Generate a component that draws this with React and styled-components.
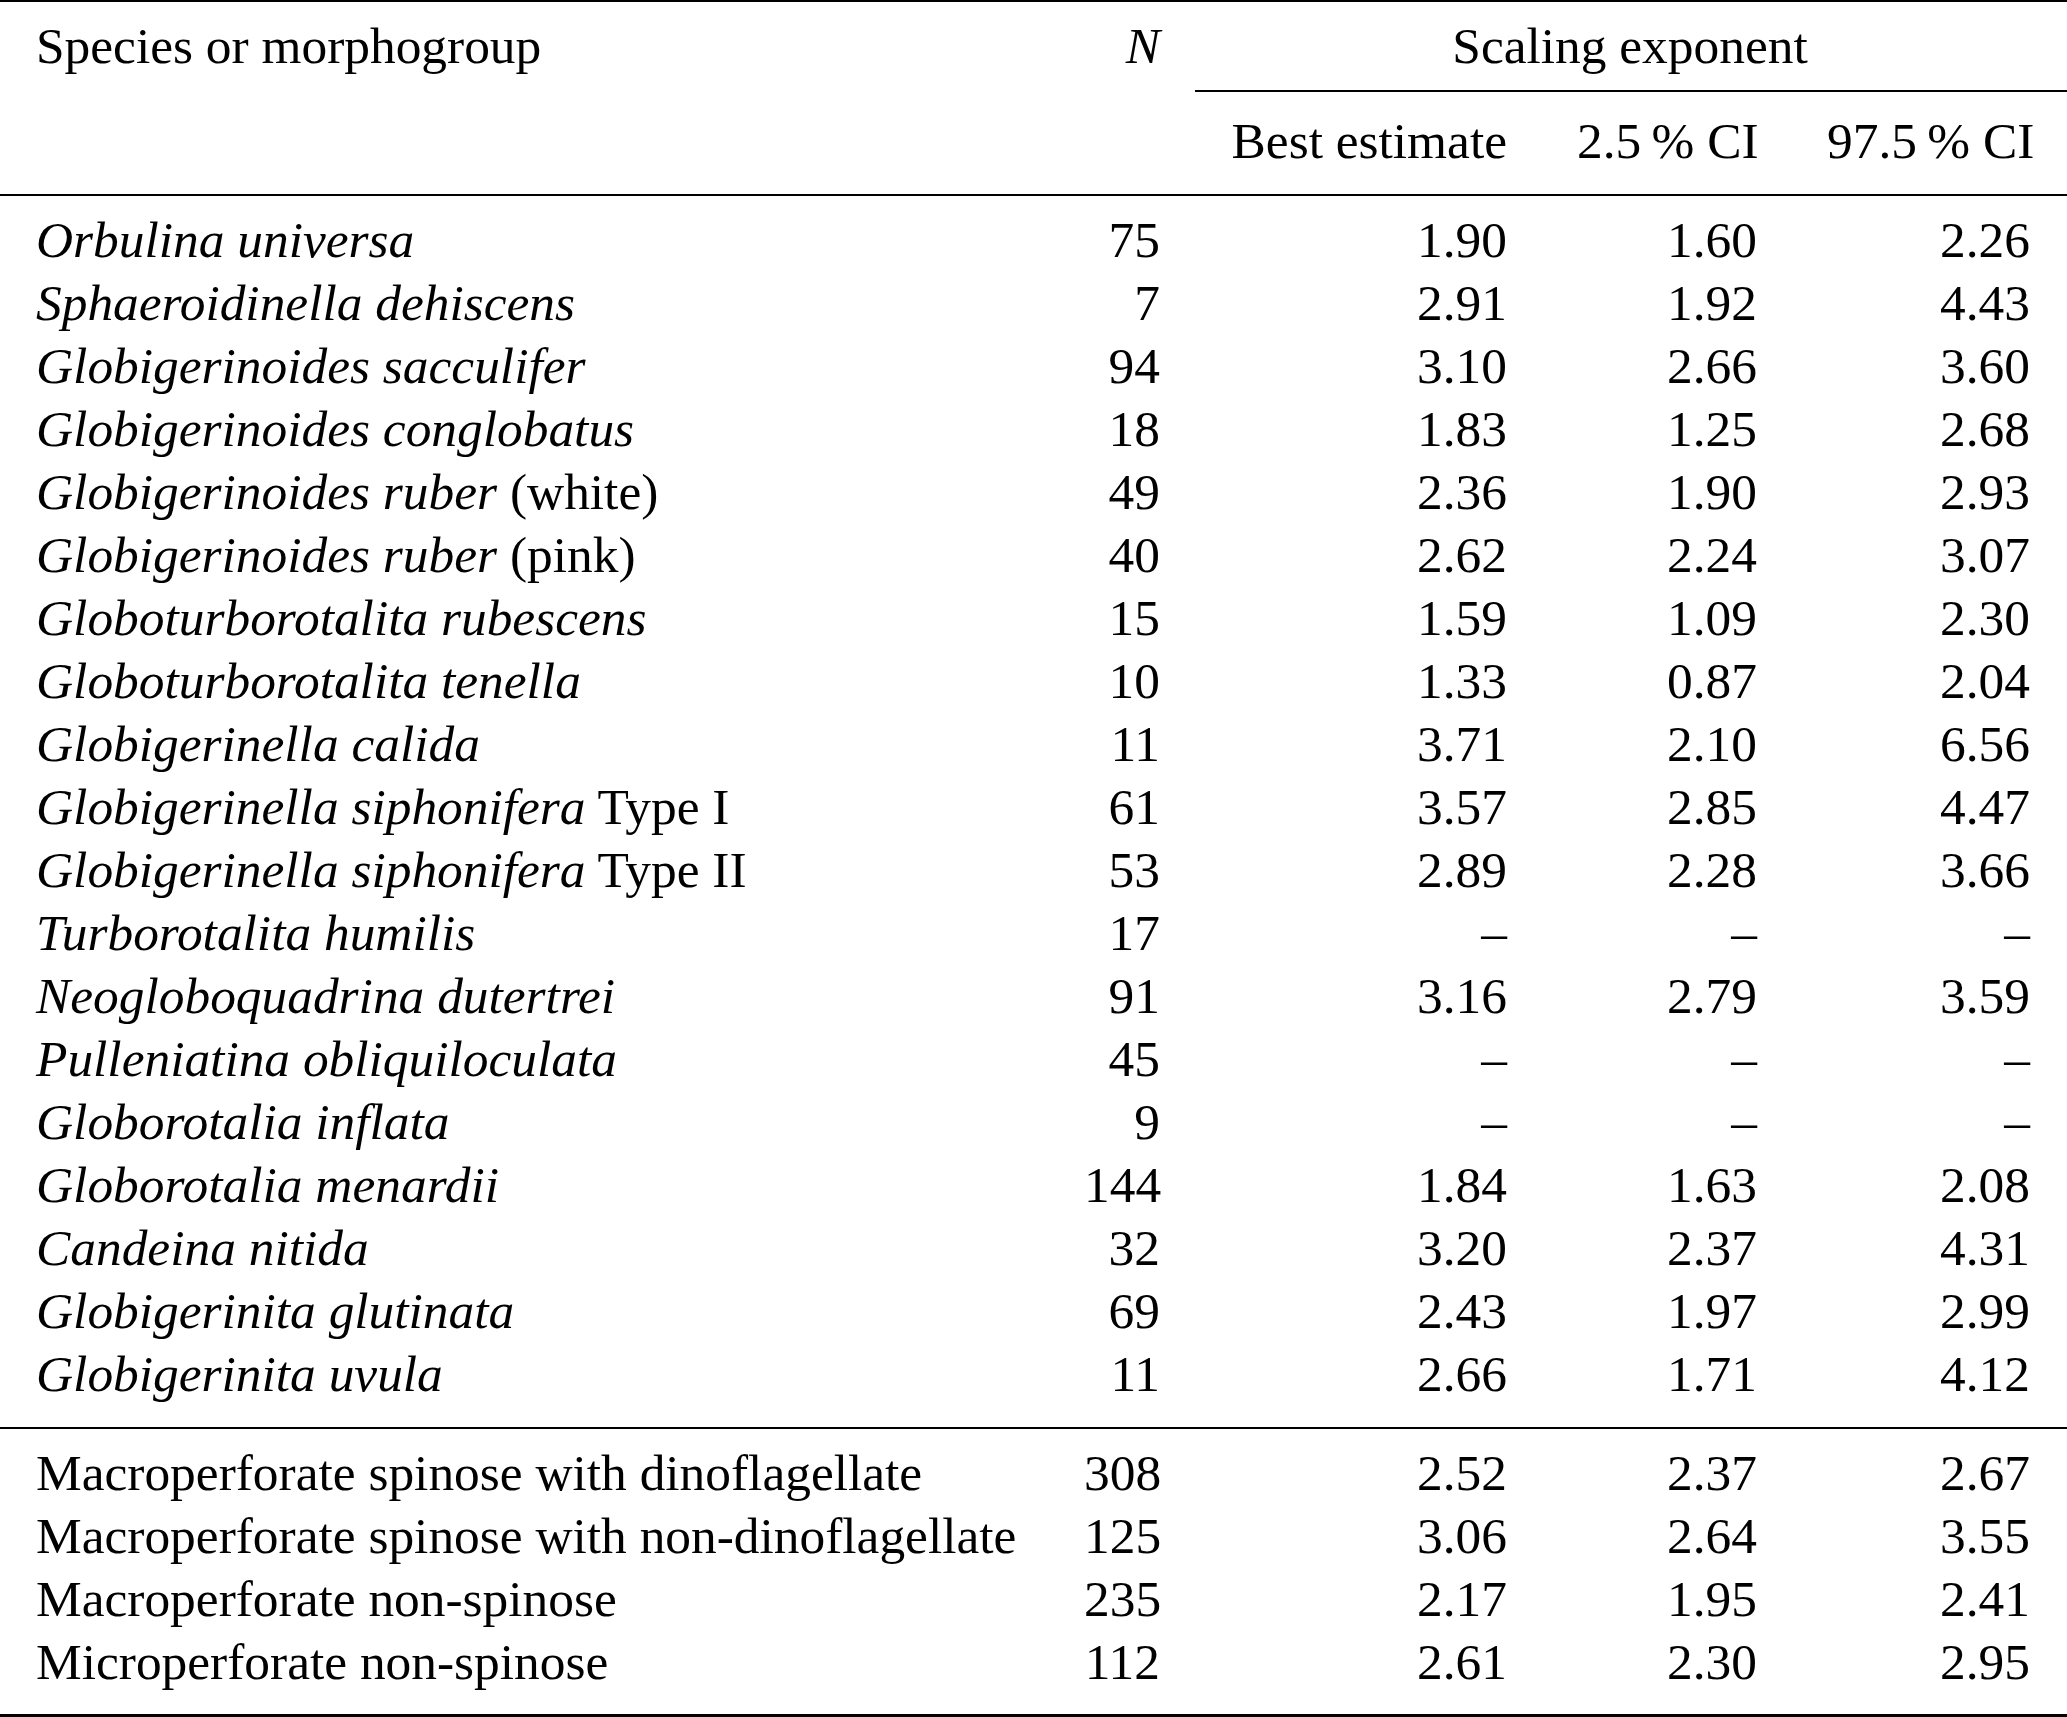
import React from "react";
import styled, { createGlobalStyle } from "styled-components";

const GlobalStyle = createGlobalStyle`
  html, body {
    margin: 0;
    padding: 0;
    background: #ffffff;
  }
`;

const Page = styled.div`
  width: 2067px;
  height: 1717px;
  overflow: hidden;
  background: #ffffff;
`;

const Table = styled.table`
  width: 2067px;
  table-layout: fixed;
  border-collapse: separate;
  border-spacing: 0;
  border-top: 2px solid #000;
  border-bottom: 3px solid #000;
  font-family: "Liberation Serif", "Times New Roman", Times, serif;
  font-size: 51.4px;
  line-height: 63px;
  color: #000;

  th,
  td {
    padding-left: 35px;
    padding-right: 35px;
    white-space: nowrap;
    vertical-align: baseline;
    font-weight: normal;
  }
  th:first-child,
  td:first-child {
    padding-left: 36px;
  }
  th:last-child,
  td:last-child {
    padding-right: 37px;
  }
`;

const Col = styled.col`
  width: ${(p) => p.$w}px;
`;

const HeadRow = styled.tr`
  & > th {
    padding-top: ${(p) => p.$pt}px;
    padding-bottom: ${(p) => p.$pb}px;
  }
`;

const HeadCell = styled.th`
  text-align: ${(p) => p.$align || "left"};
  border-bottom: 2px solid ${(p) => (p.$rule ? "#000" : "transparent")};
`;

const BodyRow = styled.tr`
  & > td {
    padding-top: ${(p) => (p.$first ? 12 : 0)}px;
    padding-bottom: ${(p) => p.$pb || 0}px;
    border-bottom: ${(p) => (p.$rule ? "2px solid #000" : "none")};
  }
`;

const Cell = styled.td`
  text-align: ${(p) => p.$align || "left"};
`;

const Taxon = styled.i`
  font-style: italic;
`;

const species = [
  ["Orbulina universa", "", "75", "1.90", "1.60", "2.26"],
  ["Sphaeroidinella dehiscens", "", "7", "2.91", "1.92", "4.43"],
  ["Globigerinoides sacculifer", "", "94", "3.10", "2.66", "3.60"],
  ["Globigerinoides conglobatus", "", "18", "1.83", "1.25", "2.68"],
  ["Globigerinoides ruber", "(white)", "49", "2.36", "1.90", "2.93"],
  ["Globigerinoides ruber", "(pink)", "40", "2.62", "2.24", "3.07"],
  ["Globoturborotalita rubescens", "", "15", "1.59", "1.09", "2.30"],
  ["Globoturborotalita tenella", "", "10", "1.33", "0.87", "2.04"],
  ["Globigerinella calida", "", "11", "3.71", "2.10", "6.56"],
  ["Globigerinella siphonifera", "Type I", "61", "3.57", "2.85", "4.47"],
  ["Globigerinella siphonifera", "Type II", "53", "2.89", "2.28", "3.66"],
  ["Turborotalita humilis", "", "17", "\u2013", "\u2013", "\u2013"],
  ["Neogloboquadrina dutertrei", "", "91", "3.16", "2.79", "3.59"],
  ["Pulleniatina obliquiloculata", "", "45", "\u2013", "\u2013", "\u2013"],
  ["Globorotalia inflata", "", "9", "\u2013", "\u2013", "\u2013"],
  ["Globorotalia menardii", "", "144", "1.84", "1.63", "2.08"],
  ["Candeina nitida", "", "32", "3.20", "2.37", "4.31"],
  ["Globigerinita glutinata", "", "69", "2.43", "1.97", "2.99"],
  ["Globigerinita uvula", "", "11", "2.66", "1.71", "4.12"],
];

const groups = [
  ["Macroperforate spinose with dinoflagellate", "308", "2.52", "2.37", "2.67"],
  ["Macroperforate spinose with non-dinoflagellate", "125", "3.06", "2.64", "3.55"],
  ["Macroperforate non-spinose", "235", "2.17", "1.95", "2.41"],
  ["Microperforate non-spinose", "112", "2.61", "2.30", "2.95"],
];

export default function App() {
  return (
    <Page>
      <GlobalStyle />
      <Table>
        <colgroup>
          <Col $w={1049} />
          <Col $w={146} />
          <Col $w={347} />
          <Col $w={250} />
          <Col $w={275} />
        </colgroup>
        <thead>
          <HeadRow $pt={12} $pb={13}>
            <HeadCell>Species or morphogroup</HeadCell>
            <HeadCell $align="right">
              <Taxon>N</Taxon>
            </HeadCell>
            <HeadCell colSpan={3} $align="center" $rule>
              Scaling exponent
            </HeadCell>
          </HeadRow>
          <HeadRow $pt={17} $pb={22}>
            <HeadCell $rule />
            <HeadCell $rule />
            <HeadCell $align="right" $rule>
              Best estimate
            </HeadCell>
            <HeadCell $align="right" $rule>
              2.5{"\u2009"}% CI
            </HeadCell>
            <HeadCell $align="right" $rule>
              97.5{"\u2009"}% CI
            </HeadCell>
          </HeadRow>
        </thead>
        <tbody>
          {species.map(([name, extra, n, best, lo, hi], i) => (
            <BodyRow
              key={name + extra}
              $first={i === 0}
              $pb={i === species.length - 1 ? 22 : 0}
              $rule={i === species.length - 1}
            >
              <Cell>
                <Taxon>{name}</Taxon>
                {extra ? ` ${extra}` : ""}
              </Cell>
              <Cell $align="right">{n}</Cell>
              <Cell $align="right">{best}</Cell>
              <Cell $align="right">{lo}</Cell>
              <Cell $align="right">{hi}</Cell>
            </BodyRow>
          ))}
        </tbody>
        <tbody>
          {groups.map(([name, n, best, lo, hi], i) => (
            <BodyRow
              key={name}
              $first={i === 0}
              $pb={i === groups.length - 1 ? 21 : 0}
            >
              <Cell>{name}</Cell>
              <Cell $align="right">{n}</Cell>
              <Cell $align="right">{best}</Cell>
              <Cell $align="right">{lo}</Cell>
              <Cell $align="right">{hi}</Cell>
            </BodyRow>
          ))}
        </tbody>
      </Table>
    </Page>
  );
}
